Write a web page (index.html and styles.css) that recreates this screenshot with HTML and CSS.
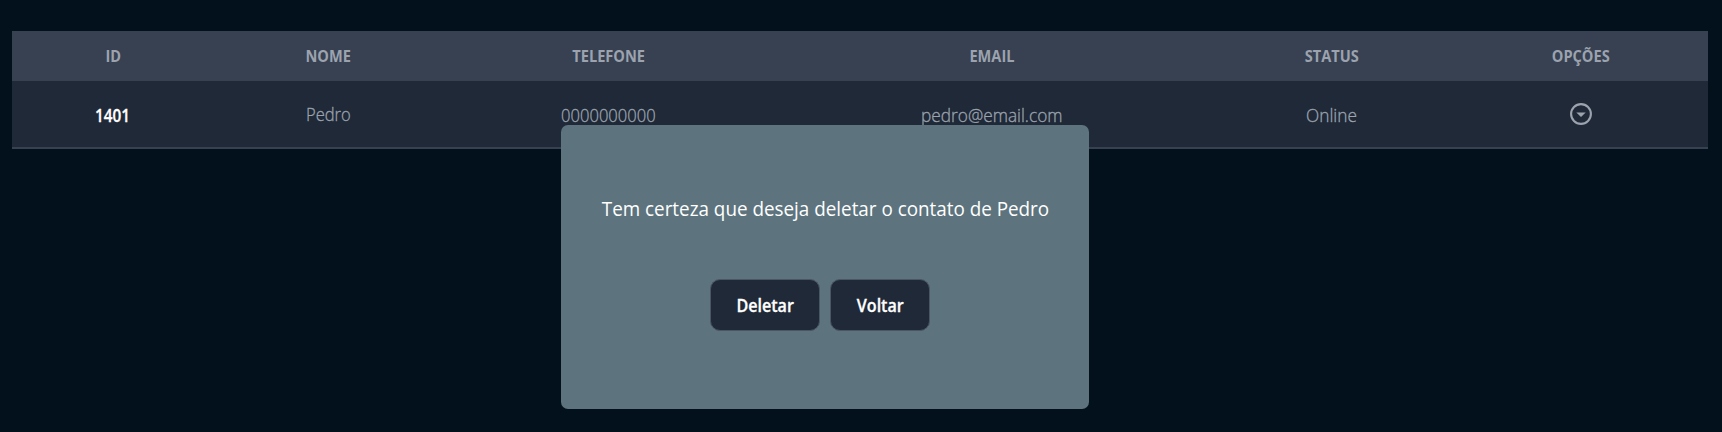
FILE: index.html
```html
<!DOCTYPE html>
<html lang="pt-BR">
<head>
<meta charset="utf-8">
<title>Contatos</title>
<link rel="stylesheet" href="styles.css">
</head>
<body>
<table class="contacts">
  <colgroup><col class="c-id"><col class="c-name"><col class="c-phone"><col class="c-email"><col class="c-status"><col class="c-options"></colgroup>
  <thead>
    <tr>
      <th><span class="head">ID</span></th>
      <th><span class="head">NOME</span></th>
      <th><span class="head">TELEFONE</span></th>
      <th><span class="head">EMAIL</span></th>
      <th><span class="head">STATUS</span></th>
      <th><span class="head">OPÇÕES</span></th>
    </tr>
  </thead>
  <tbody>
    <tr>
      <td><span class="contact-id">1401</span></td>
      <td class="name-cell"><span class="name">Pedro</span></td>
      <td><span class="phone">0000000000</span></td>
      <td><span class="email">pedro@email.com</span></td>
      <td><span class="status">Online</span></td>
      <td class="options">
        <svg class="icon" viewBox="0 0 22 22" width="22" height="22"><circle cx="11" cy="11" r="9.9" fill="none" stroke="currentColor" stroke-width="2.1"/><path d="M6.3 9.5h9.4L11 14.1z" fill="currentColor"/></svg>
      </td>
    </tr>
  </tbody>
</table>
<div class="dialog">
  <p class="message"><span class="message-text">Tem certeza que deseja deletar o contato de Pedro</span></p>
  <div class="actions">
    <button class="btn btn-delete"><span class="label">Deletar</span></button>
    <button class="btn btn-back"><span class="label">Voltar</span></button>
  </div>
</div>
</body>
</html>
```
FILE: styles.css
```css
* { box-sizing: border-box; }
body {
  margin: 0;
  padding: 31px 14px 0 12px;
  height: 432px;
  overflow: hidden;
  background: #02111b;
  font-family: "Open Sans", "Noto Sans", sans-serif;
}
.contacts {
  width: 1696px;
  table-layout: fixed;
  border-collapse: separate;
  border-spacing: 0;
  color: #9ca3af;
  text-align: center;
}
.c-id { width: 202px; }
.c-name { width: 229px; }
.c-phone { width: 331px; }
.c-email { width: 435px; }
.c-status { width: 245px; }
.c-options { width: 254px; }
th {
  height: 50px;
  padding: 0;
  background: #374151;
  font-size: 15.5px;
  font-weight: 700;
  line-height: 20px;
}
td {
  height: 68px;
  padding: 2px 0 0;
  background: #1f2937;
  border-bottom: 2px solid #374151;
  font-size: 18px;
  font-weight: 300;
  line-height: 24px;
  -webkit-text-stroke: 0.3px currentColor;
}
td.name-cell { padding-top: 0; }
td.options { padding: 0; }
.icon { display: block; margin: 0 auto; }

/* Condensed lettering */
th span, td span, .dialog span { display: inline-block; }
.head { transform: scaleX(0.94); }
.contact-id { color: #fff; font-weight: 600; transform: scaleX(0.85); }
.name, .phone { transform: scaleX(0.92); }
.email, .status { transform: scaleX(0.958); }
.message-text { transform: scaleX(0.942); }
.label { transform: scaleX(0.895); -webkit-text-stroke: 0.3px currentColor; }

.dialog {
  position: absolute;
  left: 561px;
  top: 125px;
  width: 528px;
  height: 284px;
  padding-top: 70px;
  border-radius: 7px;
  background: #5d737e;
  color: #fff;
}
.message {
  margin: 0 0 57px;
  text-align: center;
  white-space: nowrap;
  font-size: 20px;
  line-height: 27px;
}
.actions {
  display: flex;
  gap: 10px;
  padding-left: 149px;
}
.btn {
  height: 52px;
  padding: 0;
  border: 1px solid #4b5563;
  border-radius: 10px;
  background: #1f2937;
  color: #fff;
  font: 600 18px/24px "Open Sans", "Noto Sans", sans-serif;
}
.btn-delete { width: 110px; }
.btn-back { width: 100px; }
```
